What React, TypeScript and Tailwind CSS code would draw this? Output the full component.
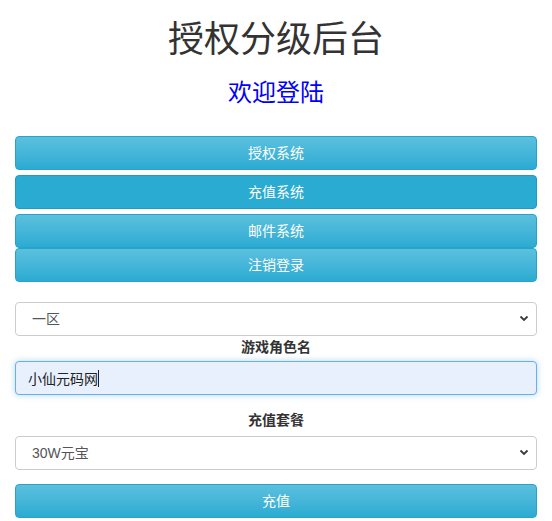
import React from "react";

const font = { fontFamily: '"Liberation Sans", "Noto Sans CJK SC", sans-serif' };

function Btn({ children, solid }: { children: React.ReactNode; solid?: boolean }) {
  return (
    <button
      className={
        solid
          ? "h-[34px] w-full rounded-[4px] border border-[#269abc] bg-[#2aabd2] text-[14px] text-white"
          : "h-[34px] w-full rounded-[4px] border border-[#28a4c9] bg-gradient-to-b from-[#5bc0de] to-[#2aabd2] text-[14px] text-white"
      }
    >
      {children}
    </button>
  );
}

function Chevron() {
  return (
    <svg className="pointer-events-none absolute right-[8px] top-[13px]" width="10" height="7" viewBox="0 0 10 7">
      <path d="M1.5 1.5 L5 5 L8.5 1.5" fill="none" stroke="#3a3a3a" strokeWidth="1.8" />
    </svg>
  );
}

function Select({ value }: { value: string }) {
  return (
    <div className="relative h-[34px] w-full">
      <select
        defaultValue={value}
        className="h-[34px] w-full appearance-none rounded-[4px] border border-[#ccc] bg-white pl-[16px] text-[14px] text-[#555] outline-none"
      >
        <option>{value}</option>
      </select>
      <Chevron />
    </div>
  );
}

export default function App() {
  return (
    <div className="min-h-[521px] w-[552px] bg-white px-[15px]" style={font}>
      <h1 className="mt-[20px] text-center text-[36px] leading-[40px] text-[#333]">授权分级后台</h1>
      <h3 className="mt-[20px] text-center text-[24px] leading-[26px] text-[#0000ff]">欢迎登陆</h3>
      <div className="mt-[30px] flex flex-col">
        <Btn>授权系统</Btn>
        <div className="mt-[5px]">
          <Btn solid>充值系统</Btn>
        </div>
        <div className="mt-[5px]">
          <Btn>邮件系统</Btn>
        </div>
        <Btn>注销登录</Btn>
      </div>
      <div className="mt-[20px]">
        <Select value="一区" />
      </div>
      <div className="h-[25px] text-center text-[14px] font-bold leading-[22px] text-[#333]">游戏角色名</div>
      <div className="relative">
        <input
          defaultValue="小仙元码网"
          className="h-[34px] w-full rounded-[4px] border border-[#66afe9] bg-[#e8f0fe] pl-[12px] text-[14px] text-[#222] shadow-[0_0_6px_rgba(102,175,233,0.5)] outline-none"
        />
        <span className="pointer-events-none absolute left-[83px] top-[9px] h-[17px] w-px bg-[#222]" />
      </div>
      <div className="mt-[15px] h-[26px] text-center text-[14px] font-bold leading-[20px] text-[#333]">充值套餐</div>
      <Select value="30W元宝" />
      <div className="mt-[14px]">
        <Btn>充值</Btn>
      </div>
    </div>
  );
}
